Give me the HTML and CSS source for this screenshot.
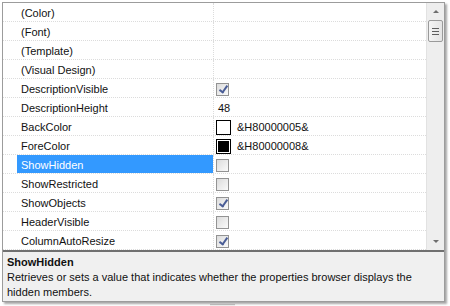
FILE: index.html
```html
<!DOCTYPE html>
<html lang="en">
<head>
    <meta charset="UTF-8">
    <title>Properties browser</title>
    <link rel="stylesheet" href="styles.css">
</head>
<body>
    <div class="frame">
        <div class="top">
            <div class="list">
                <div class="row"><div class="name">(Color)</div><div class="value"></div></div>
                <div class="row"><div class="name">(Font)</div><div class="value"></div></div>
                <div class="row"><div class="name">(Template)</div><div class="value"></div></div>
                <div class="row"><div class="name">(Visual Design)</div><div class="value"></div></div>
                <div class="row"><div class="name">DescriptionVisible</div><div class="value"><span class="check on"></span></div></div>
                <div class="row"><div class="name">DescriptionHeight</div><div class="value"><span class="num">48</span></div></div>
                <div class="row"><div class="name">BackColor</div><div class="value"><span class="swatch white"></span>&amp;H80000005&amp;</div></div>
                <div class="row"><div class="name">ForeColor</div><div class="value"><span class="swatch black"></span>&amp;H80000008&amp;</div></div>
                <div class="row selected"><div class="name">ShowHidden</div><div class="value"><span class="check"></span></div></div>
                <div class="row"><div class="name">ShowRestricted</div><div class="value"><span class="check"></span></div></div>
                <div class="row"><div class="name">ShowObjects</div><div class="value"><span class="check on"></span></div></div>
                <div class="row"><div class="name">HeaderVisible</div><div class="value"><span class="check"></span></div></div>
                <div class="row"><div class="name">ColumnAutoResize</div><div class="value"><span class="check on"></span></div></div>
            </div>
            <div class="scrollbar">
                <div class="arrow up"></div>
                <div class="thumb"><i></i><i></i><i></i></div>
                <div class="track"></div>
                <div class="arrow down"></div>
            </div>
        </div>
        <div class="desc">
            <div class="desc-title">ShowHidden</div>
            <div class="desc-text">Retrieves or sets a value that indicates whether the properties browser displays the hidden members.</div>
        </div>
    </div>
    <div class="stub"></div>
</body>
</html>
```

FILE: styles.css
```css
body {
    margin: 0;
    padding: 2px 0 0 2px;
    background: #fff;
    font-family: "Liberation Sans", Arial, sans-serif;
    font-size: 11px;
    color: #111;
}

.frame {
    width: 441px;
    border: 1px solid #9c9c9c;
    box-shadow: 2px 2px 2px rgba(0, 0, 0, 0.35);
    background: #fff;
}

.top {
    display: flex;
}

.list {
    flex: 1;
}

.row {
    display: flex;
    height: 18px;
    border-bottom: 1px dotted #dcdcdc;
    padding-left: 14px;
}

.row .name {
    width: 192px;
    height: 18px;
    padding-left: 4px;
    line-height: 20px;
    overflow: hidden;
    white-space: nowrap;
}

.row .value {
    flex: 1;
    display: flex;
    align-items: center;
    border-left: 1px dotted #dcdcdc;
    padding: 2px 0 0 2px;
    white-space: nowrap;
}

.row.selected .name {
    background: #3399ff;
    color: #fff;
}

.num {
    padding-left: 2px;
}

.check {
    width: 11px;
    height: 11px;
    border: 1px solid #939393;
    background: linear-gradient(135deg, #dcdcdc, #fafafa);
    position: relative;
}

.check.on::after {
    content: "";
    position: absolute;
    left: 4px;
    top: 0px;
    width: 3px;
    height: 7px;
    border: solid #4a5d96;
    border-width: 0 2px 2px 0;
    transform: rotate(35deg);
}

.swatch {
    width: 13px;
    height: 13px;
    border: 1px solid #000;
    margin-right: 6px;
}

.swatch.white {
    background: #fff;
}

.swatch.black {
    background: #000;
    box-shadow: inset 0 0 0 1px #fff;
}

.scrollbar {
    width: 17px;
    display: flex;
    flex-direction: column;
    background: #eeeeee;
    border-left: 1px solid #e2e2e2;
}

.arrow {
    height: 17px;
    display: flex;
    align-items: center;
    justify-content: center;
}

.arrow::after {
    content: "";
    border-left: 3px solid transparent;
    border-right: 3px solid transparent;
}

.arrow.up::after {
    border-bottom: 3px solid #6e6e6e;
}

.arrow.down::after {
    border-top: 3px solid #6e6e6e;
}

.thumb {
    height: 20px;
    margin: 0 1px;
    border: 1px solid #9a9a9a;
    border-radius: 2px;
    background: linear-gradient(90deg, #f4f4f4, #e4e4e4);
    display: flex;
    flex-direction: column;
    justify-content: center;
    align-items: center;
    gap: 2px;
}

.thumb i {
    display: block;
    width: 7px;
    height: 1px;
    background: #5e5e5e;
}

.track {
    flex: 1;
}

.desc {
    border-top: 2px solid #707070;
    background: #f0f0f0;
    height: 45px;
    padding: 3px 4px 1px 4px;
    line-height: 15px;
}

.desc-title {
    font-weight: bold;
}

.stub {
    margin: 2px 0 0 208px;
    width: 25px;
    height: 3px;
    border-top: 1px solid #b8b8b8;
    background: #ececec;
}
```
